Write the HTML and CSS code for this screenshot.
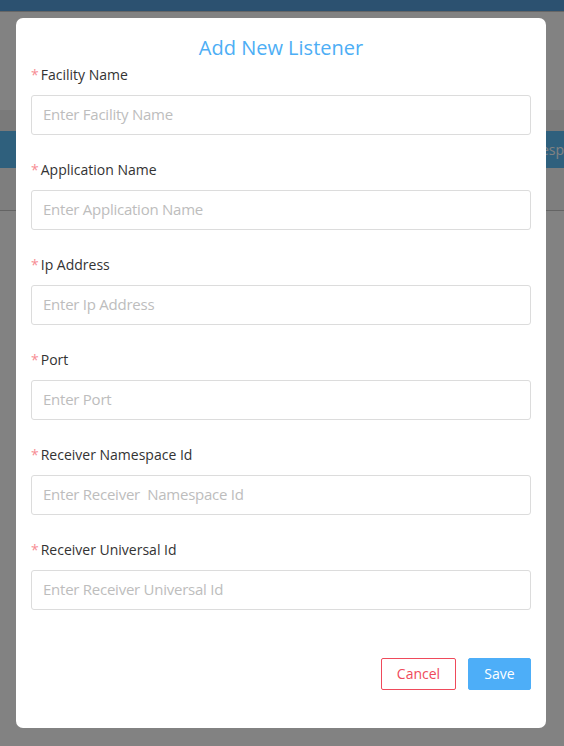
FILE: index.html
```html
<!DOCTYPE html>
<html>
<head>
<meta charset="utf-8">
<link rel="stylesheet" href="styles.css">
</head>
<body>
<div class="page">
  <div class="topbar"></div>
  <div class="topline"></div>
  <div class="area1"></div>
  <div class="area2"></div>
  <div class="band"><span class="band-text">esp</span></div>
  <div class="area3"></div>
  <div class="rule"></div>
  <div class="area4"></div>
</div>
<div class="overlay"></div>
<div class="modal">
  <h2 class="title">Add New Listener</h2>
  <form class="form">
    <div class="field">
      <label class="label"><span class="req">*</span>Facility Name</label>
      <input class="input" placeholder="Enter Facility Name">
    </div>
    <div class="field">
      <label class="label"><span class="req">*</span>Application Name</label>
      <input class="input" placeholder="Enter Application Name">
    </div>
    <div class="field">
      <label class="label"><span class="req">*</span>Ip Address</label>
      <input class="input" placeholder="Enter Ip Address">
    </div>
    <div class="field">
      <label class="label"><span class="req">*</span>Port</label>
      <input class="input" placeholder="Enter Port">
    </div>
    <div class="field">
      <label class="label"><span class="req">*</span>Receiver Namespace Id</label>
      <input class="input" placeholder="Enter Receiver  Namespace Id">
    </div>
    <div class="field">
      <label class="label"><span class="req">*</span>Receiver Universal Id</label>
      <input class="input" placeholder="Enter Receiver Universal Id">
    </div>
    <div class="actions">
      <button type="button" class="btn btn-cancel">Cancel</button>
      <button type="button" class="btn btn-save">Save</button>
    </div>
  </form>
</div>
</body>
</html>
```
FILE: styles.css
```css
* { box-sizing: border-box; }
html, body { margin: 0; padding: 0; }
body {
  font-family: "Open Sans", "Liberation Sans", sans-serif;
  background: #fff;
  width: 564px;
  height: 746px;
  overflow: hidden;
}
.page { display: flex; flex-direction: column; height: 746px; }
.topbar { height: 11px; background: #56a0dc; }
.topline { height: 1px; background: #c8c8c8; }
.area1 { height: 98px; background: #fff; }
.area2 { height: 21px; background: #f0f0f0; }
.band {
  height: 37px;
  background: #5cbdf6;
  display: flex;
  align-items: center;
  justify-content: flex-end;
  color: #fff;
  font-size: 14px;
  overflow: hidden;
}
.area3 { height: 42px; background: #f8f8f8; }
.rule { height: 1px; background: #c4c4c4; }
.area4 { flex: 1; background: #fff; }
.overlay {
  position: fixed;
  inset: 0;
  background: rgba(0, 0, 0, 0.49);
}
.modal {
  position: fixed;
  left: 16px;
  top: 18px;
  width: 530px;
  height: 710px;
  background: #fff;
  border-radius: 7px;
  padding: 16px 15px 0 15px;
}
.title {
  margin: 0 0 3px;
  text-align: center;
  font-weight: 400;
  font-size: 20px;
  line-height: 28px;
  color: #4daef5;
}
.form { display: flex; flex-direction: column; gap: 25px; }
.field { display: flex; flex-direction: column; gap: 10px; }
.label {
  font-size: 14px;
  line-height: 20px;
  color: #333;
}
.req { color: #f78d94; margin-right: 2px; }
.input {
  width: 500px;
  height: 40px;
  border: 1px solid #dcdcdc;
  border-radius: 3px;
  padding: 0 11px 3px;
  font-family: "Open Sans", "Liberation Sans", sans-serif;
  font-size: 15px;
  letter-spacing: -0.25px;
  color: #333;
  outline: none;
}
.input::placeholder { color: #bdbdbd; }
.actions {
  display: flex;
  justify-content: flex-end;
  gap: 12px;
  margin-top: 23px;
}
.btn {
  height: 32px;
  border-radius: 2px;
  font-family: "Open Sans", "Liberation Sans", sans-serif;
  font-size: 14px;
  padding: 0 0 2px;
  cursor: pointer;
}
.btn-cancel {
  width: 75px;
  background: #fff;
  border: 1px solid #ef4a5b;
  color: #ef4a5b;
}
.btn-save {
  width: 63px;
  background: #4daef8;
  border: 1px solid #4daef8;
  color: #fff;
}
```
